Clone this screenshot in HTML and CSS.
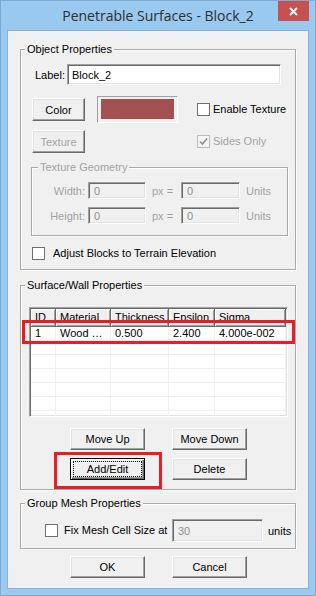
FILE: index.html
```html
<!doctype html>
<html lang="en">
  <head>
    <meta charset="UTF-8" />
    <title>Penetrable Surfaces - Block_2</title>
    <link rel="stylesheet" href="styles.css">
  </head>
  <body>
    <div class="window">
      <div class="titlebar">
        <span class="title">Penetrable Surfaces - Block_2</span>
        <button class="close" aria-label="Close">
          <svg width="9" height="9" viewBox="0 0 9 9">
            <path d="M1 1L8 8M8 1L1 8" stroke="#fff" stroke-width="1.8" fill="none" />
          </svg>
        </button>
      </div>

      <div class="client">
        <!-- Object properties -->
        <div class="group object">
          <div class="group-title">Object Properties</div>
          <div class="label-row">
            <label class="label-text">Label:</label>
            <input class="field label-field" value="Block_2" />
          </div>
          <div class="color-row">
            <button class="btn small"><span>Color</span></button>
            <div class="swatch"><div class="swatch-fill"></div></div>
            <label class="check-item enable"><span class="check"></span>Enable Texture</label>
          </div>
          <div class="texture-row">
            <button class="btn small" disabled><span>Texture</span></button>
            <label class="check-item sides off">
              <span class="check checked">
                <svg width="11" height="11" viewBox="0 0 11 11">
                  <path d="M2 5.5L4.5 8L9 2.5" stroke="#8f8f8f" stroke-width="1.6" fill="none" />
                </svg>
              </span>Sides Only
            </label>
          </div>

          <div class="group geometry">
            <div class="group-title">Texture Geometry</div>
            <div class="geo-row">
              <span class="geo-label">Width:</span>
              <input class="field geo-field" value="0" disabled />
              <span class="px">px =</span>
              <input class="field geo-field wide" value="0" disabled />
              <span class="units">Units</span>
            </div>
            <div class="geo-row second">
              <span class="geo-label">Height:</span>
              <input class="field geo-field" value="0" disabled />
              <span class="px">px =</span>
              <input class="field geo-field wide" value="0" disabled />
              <span class="units">Units</span>
            </div>
          </div>

          <label class="check-item adjust"><span class="check"></span>Adjust Blocks to Terrain Elevation</label>
        </div>

        <!-- Surface / wall list -->
        <div class="group surface">
          <div class="group-title">Surface/Wall Properties</div>
          <div class="table-wrap">
            <div class="grid">
              <table>
                <colgroup>
                  <col class="c-id" />
                  <col class="c-mat" />
                  <col class="c-thick" />
                  <col class="c-eps" />
                  <col class="c-sig" />
                </colgroup>
                <thead>
                  <tr><th>ID</th><th>Material</th><th>Thickness</th><th>Epsilon</th><th>Sigma</th></tr>
                </thead>
                <tbody>
                  <tr><td>1</td><td>Wood …</td><td>0.500</td><td>2.400</td><td>4.000e-002</td></tr>
                  <tr><td></td><td></td><td></td><td></td><td></td></tr>
                  <tr><td></td><td></td><td></td><td></td><td></td></tr>
                  <tr><td></td><td></td><td></td><td></td><td></td></tr>
                  <tr><td></td><td></td><td></td><td></td><td></td></tr>
                  <tr><td></td><td></td><td></td><td></td><td></td></tr>
                  <tr><td></td><td></td><td></td><td></td><td></td></tr>
                </tbody>
              </table>
            </div>
            <span class="mark row-mark"></span>
          </div>
          <div class="list-buttons">
            <button class="btn"><span>Move Up</span></button>
            <button class="btn"><span>Move Down</span></button>
          </div>
          <div class="list-buttons second">
            <div class="mark-wrap">
              <button class="btn default"><span>Add/Edit</span></button>
              <span class="mark edit-mark"></span>
            </div>
            <button class="btn"><span>Delete</span></button>
          </div>
        </div>

        <!-- Group mesh -->
        <div class="group mesh">
          <div class="group-title">Group Mesh Properties</div>
          <div class="mesh-row">
            <label class="check-item fix"><span class="check"></span><span class="mesh-text">Fix Mesh Cell Size at</span></label>
            <input class="field mesh-field" value="30" disabled />
            <span class="mesh-units">units</span>
          </div>
        </div>

        <div class="dialog-buttons">
          <button class="btn"><span>OK</span></button>
          <button class="btn"><span>Cancel</span></button>
        </div>
      </div>
    </div>
  </body>
</html>
```

FILE: styles.css
```css
* {
  box-sizing: border-box;
}

body {
  margin: 0;
  font-family: "Liberation Sans", Arial, sans-serif;
  font-size: 11px;
  color: #000;
}

/* Window frame */
.window {
  width: 316px;
  height: 596px;
  display: flex;
  flex-direction: column;
  background: #99c9ef;
  border: 1px solid #7fa8d2;
  padding: 0 6px 6px;
}

.titlebar {
  height: 29px;
  flex-shrink: 0;
  display: grid;
  grid-template-columns: 1fr auto 1fr;
}

.title {
  grid-column: 2;
  font-family: "Open Sans", sans-serif;
  font-size: 14px;
  line-height: 29px;
  color: #2e2e2e;
  white-space: nowrap;
}

.close {
  grid-column: 3;
  justify-self: end;
  width: 31px;
  height: 20px;
  border: 0;
  padding: 0;
  background: #c75050;
  display: flex;
  align-items: center;
  justify-content: center;
}

.client {
  flex: 1;
  background: #f0f0f0;
  border: 1px solid #86b3dc;
}

/* Group boxes */
.group {
  margin: 0 12px;
  border: 1px solid #a9a9a9;
  box-shadow: inset 1px 1px 0 #fff, 1px 1px 0 #fff;
}

.group-title {
  display: table;
  margin: -7px 0 0 4px;
  padding: 0 2px;
  line-height: 13px;
  background: #f0f0f0;
  white-space: nowrap;
}

.object {
  margin-top: 18px;
  padding-bottom: 9px;
}

.surface {
  margin-top: 15px;
  padding-bottom: 9px;
}

.mesh {
  margin-top: 13px;
  padding-bottom: 6px;
}

.geometry {
  margin: 14px 7px 0 10px;
  padding-bottom: 11px;
  color: #a3a3a3;
}

.geometry .group-title {
  margin-left: 6px;
}

/* Inputs */
.field {
  font: inherit;
  color: #000;
  background: #fff;
  border: 1px solid;
  border-color: #a0a0a0 #fff #fff #a0a0a0;
  box-shadow: inset 1px 1px 0 #696969, inset -1px -1px 0 #e3e3e3;
  padding: 0 0 0 4px;
  outline: none;
}

.field:disabled {
  background: #f0f0f0;
  color: #8d8d8d;
  padding-left: 5px;
}

.label-row {
  display: flex;
  align-items: center;
  margin: 8px 0 0 14px;
}

.label-text {
  width: 32px;
}

.label-field {
  width: 214px;
  height: 21px;
}

/* Buttons */
.btn {
  width: 75px;
  height: 22px;
  padding: 0;
  font: inherit;
  color: #000;
  background: #f0f0f0;
  border: 1px solid;
  border-color: #fff #696969 #696969 #fff;
  box-shadow: inset -1px -1px 0 #a0a0a0, inset 1px 1px 0 #e3e3e3;
  display: flex;
}

.btn span {
  flex: 1;
  margin: 2px;
  border: 1px dotted transparent;
  display: flex;
  align-items: center;
  justify-content: center;
}

.btn:disabled {
  color: #a3a3a3;
}

.btn.small {
  width: 53px;
  height: 23px;
}

.btn.default {
  border-color: #000;
  box-shadow: inset 1px 1px 0 #fff, inset -1px -1px 0 #696969, inset -2px -2px 0 #a0a0a0;
}

.btn.default span {
  border-color: #000;
}

/* Color row */
.color-row {
  display: flex;
  align-items: center;
  margin: 11px 0 0 11px;
}

.swatch {
  width: 81px;
  height: 27px;
  margin-left: 12px;
  padding: 2px 3px 3px 3px;
  border: 1px solid;
  border-color: #a0a0a0 #fff #fff #a0a0a0;
}

.swatch-fill {
  height: 100%;
  background: #a35050;
}

.texture-row {
  display: flex;
  align-items: center;
  margin: 7px 0 0 11px;
}

/* Check boxes */
.check-item {
  display: flex;
  align-items: center;
  line-height: 13px;
  white-space: nowrap;
}

.check {
  width: 13px;
  height: 13px;
  flex-shrink: 0;
  margin-right: 3px;
  border: 1px solid #707070;
  background: #fff;
  display: flex;
  align-items: center;
  justify-content: center;
}

.check-item.off {
  color: #a3a3a3;
}

.check-item.off .check {
  border-color: #bcbcbc;
  background: #f4f4f4;
}

.enable {
  margin-left: 19px;
}

.sides {
  margin-left: 112px;
}

.adjust {
  margin: 11px 0 0 11px;
}

.adjust .check {
  margin-right: 8px;
}

/* Texture geometry rows */
.geo-row {
  display: flex;
  align-items: center;
  margin-top: 8px;
}

.geo-label {
  width: 53px;
  margin-right: 3px;
  text-align: right;
}

.geo-field {
  width: 58px;
  height: 17px;
}

.geo-field.wide {
  width: 59px;
}

.px {
  width: 29px;
  margin-left: 6px;
}

.units {
  margin-left: 6px;
}

/* Surface list */
.table-wrap {
  position: relative;
  margin: 15px 0 0 8px;
  width: 259px;
}

.grid {
  height: 110px;
  overflow: hidden;
  padding: 1px;
  background: #fff;
  border: 1px solid;
  border-color: #a0a0a0 #fff #fff #a0a0a0;
  box-shadow: inset 1px 1px 0 #696969, inset -1px -1px 0 #e3e3e3;
}

.grid table {
  width: 255px;
  table-layout: fixed;
  border-collapse: separate;
  border-spacing: 0;
}

.c-id { width: 25px; }
.c-mat { width: 55px; }
.c-thick { width: 58px; }
.c-eps { width: 46px; }
.c-sig { width: 71px; }

.grid th {
  height: 18px;
  padding: 0 4px;
  text-align: left;
  font-weight: normal;
  line-height: 17px;
  background: #f0f0f0;
  border-right: 1px solid #696969;
  border-bottom: 1px solid #696969;
  box-shadow: inset 1px 1px 0 #fff, inset -1px -1px 0 #a0a0a0;
  white-space: nowrap;
  overflow: hidden;
}

.grid td {
  height: 14px;
  padding: 0 4px;
  line-height: 13px;
  border-right: 1px solid #f0f0f0;
  border-bottom: 1px solid #f0f0f0;
  white-space: nowrap;
  overflow: hidden;
}

.list-buttons {
  display: flex;
  gap: 27px;
  margin-top: 11px;
  padding-left: 49px;
}

.list-buttons.second {
  margin-top: 8px;
}

.mark-wrap {
  position: relative;
  display: flex;
}

/* red highlight boxes drawn over the dialog */
.mark {
  position: absolute;
  border: 3px solid #ed1c24;
  pointer-events: none;
}

.row-mark {
  left: -7px;
  top: 13px;
  width: 273px;
  height: 24px;
}

.edit-mark {
  left: -16px;
  top: -6px;
  width: 108px;
  height: 37px;
}

/* Group mesh */
.mesh-row {
  display: flex;
  align-items: center;
  margin: 9px 0 0 24px;
}

.fix .check {
  margin-right: 6px;
}

.mesh-text {
  width: 108px;
}

.mesh-field {
  width: 91px;
  height: 23px;
}

.mesh-units {
  margin-left: 5px;
}

.dialog-buttons {
  display: flex;
  gap: 27px;
  margin-top: 7px;
  padding-left: 62px;
}
```
